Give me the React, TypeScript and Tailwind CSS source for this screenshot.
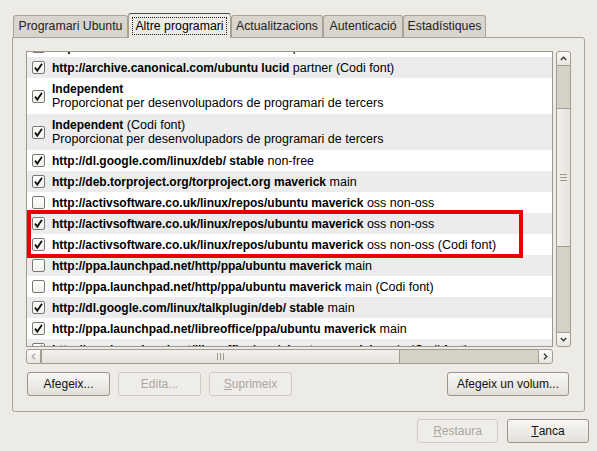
import React from 'react';

type Row = {
  bold: string;
  rest?: string;
  sub?: string;
  checked: boolean;
};

const ACTIV = 'http://activsoftware.co.uk/linux/repos/ubuntu maverick';
const PPA = 'http://ppa.launchpad.net/http/ppa/ubuntu maverick';
const TAGLINE = 'Proporcionat per desenvolupadors de programari de tercers';

const rows: Row[] = [
  { bold: 'http://archive.canonical.com/ubuntu lucid', rest: 'partner', checked: true },
  { bold: 'http://archive.canonical.com/ubuntu lucid', rest: 'partner (Codi font)', checked: true },
  { bold: 'Independent', sub: TAGLINE, checked: true },
  { bold: 'Independent', rest: '(Codi font)', sub: TAGLINE, checked: true },
  { bold: 'http://dl.google.com/linux/deb/ stable', rest: 'non-free', checked: true },
  { bold: 'http://deb.torproject.org/torproject.org maverick', rest: 'main', checked: true },
  { bold: ACTIV, rest: 'oss non-oss', checked: false },
  { bold: ACTIV, rest: 'oss non-oss', checked: true },
  { bold: ACTIV, rest: 'oss non-oss (Codi font)', checked: true },
  { bold: PPA, rest: 'main', checked: false },
  { bold: PPA, rest: 'main (Codi font)', checked: false },
  { bold: 'http://dl.google.com/linux/talkplugin/deb/ stable', rest: 'main', checked: true },
  { bold: 'http://ppa.launchpad.net/libreoffice/ppa/ubuntu maverick', rest: 'main', checked: true },
  { bold: 'http://ppa.launchpad.net/libreoffice/ppa/ubuntu maverick', rest: 'main (Codi font)', checked: true },
];

function CheckBox({ checked }: { checked: boolean }) {
  return (
    <div className="flex h-[13px] w-[13px] shrink-0 items-center justify-center rounded-[2px] border border-[#7d786f] bg-gradient-to-b from-white to-[#f1f0ee]">
      {checked && (
        <svg width="11" height="11" viewBox="0 0 11 11">
          <path d="M2 5.6 L4.3 8.6 L9 1.8" stroke="#111" strokeWidth="1.8" fill="none" />
        </svg>
      )}
    </div>
  );
}

function SourceRow({ row, idx }: { row: Row; idx: number }) {
  const grey = idx % 2 === 1;
  return (
    <div
      className={`flex shrink-0 items-center gap-[7px] whitespace-nowrap pl-[5px] ${
        row.sub ? 'h-[36px]' : 'h-[21px]'
      } ${grey ? 'bg-[#ececec]' : 'bg-white'} ${idx === 0 ? 'mt-[-16px]' : ''}`}
    >
      <CheckBox checked={row.checked} />
      <div className="leading-[14px]">
        <div>
          <span className="font-bold">{row.bold}</span>
          {row.rest && <span className="text-[12.5px]"> {row.rest}</span>}
        </div>
        {row.sub && <div className="text-[12.5px]">{row.sub}</div>}
      </div>
    </div>
  );
}

function Tab({ label, width, active }: { label: string; width: string; active?: boolean }) {
  if (active) {
    return (
      <div
        className={`relative z-10 mb-[-1px] flex h-[25px] ${width} items-center justify-center rounded-t-[3px] border border-b-0 border-[#a49e93] border-t-[#4b4b4b] bg-[#edebe6] px-[2px]`}
      >
        <span className="border border-dotted border-[#222] px-[2px] leading-[16px]">{label}</span>
      </div>
    );
  }
  return (
    <div
      className={`flex h-[22px] ${width} items-center justify-center rounded-t-[3px] border border-b-0 border-[#a8a298] bg-[#d9d5cc] text-[#222]`}
    >
      {label}
    </div>
  );
}

function Button({
  children,
  width,
  disabled,
}: {
  children: React.ReactNode;
  width: string;
  disabled?: boolean;
}) {
  return (
    <div
      className={`flex h-[24px] ${width} items-center justify-center rounded-[3px] border ${
        disabled
          ? 'border-[#cfcac1] bg-[#efede9] text-[#aba69e]'
          : 'border-[#9a9388] bg-gradient-to-b from-[#f8f7f5] to-[#e3e0da] text-[#111]'
      }`}
    >
      {children}
    </div>
  );
}

function VScrollbar() {
  return (
    <div className="flex h-[296px] w-[15px] flex-col">
      <div className="flex h-[15px] items-center justify-center rounded-t-[3px] border border-[#a39c91] bg-gradient-to-b from-[#fbfaf8] to-[#e9e6e1]">
        <svg width="7" height="5" viewBox="0 0 7 5">
          <path d="M0.8 4 L3.5 1.2 L6.2 4" stroke="#333" strokeWidth="1.3" fill="none" />
        </svg>
      </div>
      <div className="h-[42px] border-x border-[#a39c91] bg-[#d6d1c7]" />
      <div className="flex h-[139px] flex-col items-center justify-center gap-[2px] border border-[#a39c91] bg-gradient-to-r from-[#f2f0ec] to-[#e6e3de]">
        <div className="h-px w-[7px] bg-[#9d978d]" />
        <div className="h-px w-[7px] bg-[#9d978d]" />
        <div className="h-px w-[7px] bg-[#9d978d]" />
      </div>
      <div className="h-[85px] border-x border-[#a39c91] bg-[#d6d1c7]" />
      <div className="flex h-[15px] items-center justify-center rounded-b-[3px] border border-[#a39c91] bg-gradient-to-b from-[#fbfaf8] to-[#e9e6e1]">
        <svg width="7" height="5" viewBox="0 0 7 5">
          <path d="M0.8 1 L3.5 3.8 L6.2 1" stroke="#333" strokeWidth="1.3" fill="none" />
        </svg>
      </div>
    </div>
  );
}

function HScrollbar() {
  return (
    <div className="flex h-[15px] w-[527px]">
      <div className="flex w-[15px] items-center justify-center rounded-l-[3px] border border-[#a39c91] bg-gradient-to-b from-[#fbfaf8] to-[#e9e6e1]">
        <svg width="5" height="7" viewBox="0 0 5 7">
          <path d="M4 0.8 L1.2 3.5 L4 6.2" stroke="#b2aca3" strokeWidth="1.3" fill="none" />
        </svg>
      </div>
      <div className="flex w-[359px] items-center justify-center gap-[2px] border border-[#a39c91] bg-gradient-to-b from-[#f2f0ec] to-[#e6e3de]">
        <div className="h-[7px] w-px bg-[#9d978d]" />
        <div className="h-[7px] w-px bg-[#9d978d]" />
        <div className="h-[7px] w-px bg-[#9d978d]" />
      </div>
      <div className="w-[138px] border-y border-[#a39c91] bg-[#d6d1c7]" />
      <div className="flex w-[15px] items-center justify-center rounded-r-[3px] border border-[#a39c91] bg-gradient-to-b from-[#fbfaf8] to-[#e9e6e1]">
        <svg width="5" height="7" viewBox="0 0 5 7">
          <path d="M1 0.8 L3.8 3.5 L1 6.2" stroke="#333" strokeWidth="1.3" fill="none" />
        </svg>
      </div>
    </div>
  );
}

export default function App() {
  return (
    <div className="relative h-[451px] w-[597px] overflow-hidden bg-[#edebe6] pt-[13px] font-['Liberation_Sans',Arial,sans-serif] text-[12px] text-black">
      {/* tab strip */}
      <div className="flex h-[24px] items-end pl-[13px] text-[12.3px]">
        <Tab label="Programari Ubuntu" width="w-[115px]" />
        <Tab label="Altre programari" width="w-[103px]" active />
        <Tab label="Actualitzacions" width="w-[92px]" />
        <Tab label="Autenticació" width="w-[80px]" />
        <Tab label="Estadístiques" width="w-[83px]" />
      </div>

      {/* notebook page */}
      <div className="ml-[12px] h-[375px] w-[573px] rounded-b-[3px] rounded-tr-[3px] border border-[#a8a298] pl-[13px] pt-[13px]">
        <div className="flex gap-[3px]">
          <div className="flex flex-col gap-[2px]">
            <div className="flex h-[296px] w-[527px] flex-col overflow-hidden border border-[#9e988e] bg-white">
              {rows.map((row, idx) => (
                <SourceRow key={idx} row={row} idx={idx} />
              ))}
            </div>
            <HScrollbar />
          </div>
          <VScrollbar />
        </div>

        <div className="mt-[8px] flex w-[543px] justify-between">
          <div className="flex gap-[8px] pl-[1px]">
            <Button width="w-[83px]">Afegeix...</Button>
            <Button width="w-[83px]" disabled>
              Edita...
            </Button>
            <Button width="w-[83px]" disabled>
              <span className="underline">S</span>uprimeix
            </Button>
          </div>
          <Button width="w-[122px]">Afegeix un volum...</Button>
        </div>
      </div>

      {/* dialog buttons */}
      <div className="mt-[7px] flex justify-end gap-[9px] pr-[8px]">
        <Button width="w-[81px]" disabled>
          <span className="underline">R</span>estaura
        </Button>
        <Button width="w-[82px]">
          <span className="underline">T</span>anca
        </Button>
      </div>

      {/* red highlight drawn over the screenshot */}
      <div className="pointer-events-none absolute left-[27px] top-[210px] h-[48px] w-[496px] border-4 border-[#e60000]" />
    </div>
  );
}
